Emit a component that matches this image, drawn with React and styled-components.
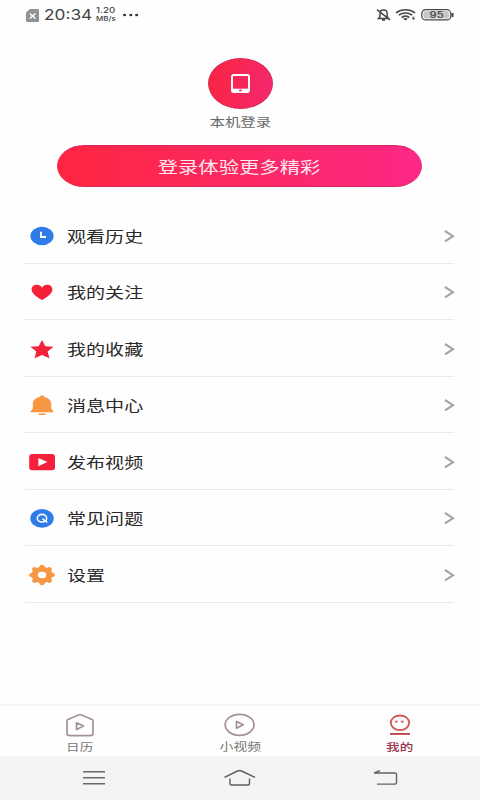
import React from 'react';
import styled, { createGlobalStyle } from 'styled-components';

const Global = createGlobalStyle`
  *, *::before, *::after { box-sizing: border-box; }
  body { margin: 0; background: #fefefe; font-family: "Liberation Sans", "Noto Sans CJK SC", sans-serif; }
  svg { display: block; flex: none; overflow: visible; }
`;

const Screen = styled.div`
  width: 480px;
  height: 800px;
  display: flex;
  flex-direction: column;
  background: #fefefe;
  overflow: hidden;
`;

const Wide = styled.span`
  display: block;
  flex: none;
  white-space: nowrap;
  font-family: ${p => p.$latin ? '"Inter", sans-serif' : '"Noto Sans CJK SC", sans-serif'};
  font-size: ${p => p.$size}px;
  line-height: ${p => p.$line || 20}px;
  font-weight: ${p => p.$weight || 400};
  color: ${p => p.$color};
  transform: scaleX(${p => p.$stretch || 1.27});
  transform-origin: ${p => p.$origin || 'center'};
`;

const StatusBar = styled.header`
  height: 30px;
  flex: none;
  display: flex;
  justify-content: space-between;
  padding: 0 26px 0 26px;
`;

const StatusGroup = styled.div`
  display: flex;
  align-items: center;
`;

const Clock = styled.div`
  width: 48px;
  margin-left: 5px;
`;

const Speed = styled.div`
  width: 20px;
  margin: 0 0 0 4px;
`;

const Profile = styled.section`
  flex: none;
  height: 177px;
  padding-top: 28px;
  display: flex;
  flex-direction: column;
  align-items: center;
`;

const Avatar = styled.div`
  width: 65px;
  height: 51px;
  border-radius: 50%;
  display: grid;
  place-items: center;
  background: linear-gradient(100deg, #fb2440, #f4286f);
  border: 1px solid #d52852;
`;

const AccountName = styled.div`
  margin-top: 3px;
`;

const LoginButton = styled.button`
  width: 365px;
  height: 42px;
  margin: 13px 1px 0 0;
  padding: 0;
  border: 1px solid #d9285f;
  border-left-color: #f8284a;
  border-right-color: #f52a83;
  border-radius: 27px / 21px;
  display: grid;
  place-items: center;
  background: linear-gradient(90deg, #fe2540, #fc2861 50%, #fc2886);
`;

const Menu = styled.nav`
  flex: 1;
  margin: 0 26px 0 25px;
`;

const Row = styled.a`
  height: 56.5px;
  display: flex;
  align-items: center;
  padding: 2px 0 0 3px;
  border-bottom: 1px solid #e9e9e9;
`;

const RowLabel = styled.div`
  flex: 1;
  margin-left: 11px;
  display: flex;
`;

const TabBar = styled.nav`
  height: 52px;
  flex: none;
  display: grid;
  grid-template-columns: repeat(3, 1fr);
  border-top: 2px solid #f4f4f4;
`;

const Tab = styled.a`
  display: flex;
  flex-direction: column;
  align-items: center;
  padding-top: 6px;
`;

const SystemBar = styled.footer`
  height: 44px;
  flex: none;
  display: flex;
  justify-content: space-between;
  align-items: center;
  padding: 0 81px;
  background: #f4f4f4;
`;

const icons = {
  clock: <><ellipse cx="14" cy="14" rx="11.6" ry="9.2" fill="#2f7be8" /><path d="M13 9.8V15h5" fill="none" stroke="#fff" strokeWidth="1.9" /></>,
  heart: <path d="M14 22C10.5 19.8 3.6 16 3.6 11.4C3.6 8.6 5.9 6.8 8.7 6.8C11.2 6.8 13 7.9 14 9.7C15 7.9 16.8 6.8 19.3 6.8C22.1 6.8 24.4 8.6 24.4 11.4C24.4 16 17.5 19.8 14 22Z" fill="#f42138" />,
  star: <path d="M14 5l3.3 6.2 8.3.6-6 4.8 1.9 6.7-7.5-3.3-7.5 3.3 1.9-6.7-6-4.8 8.3-.6z" fill="#f42138" />,
  bell: <path d="M12.2 4.6h3.6v1.2c4.4.9 7.4 3.7 7.4 7.2v4.8l2.1 2.4v1.1H2.7v-1.1l2.1-2.4V13c0-3.5 3-6.3 7.4-7.2zM10.3 22.4h7.4v.8q0 .8-1.5.8h-4.4q-1.5 0-1.5-.8z" fill="#f79643" />,
  video: <><rect x="1.2" y="5.9" width="25.8" height="16.4" rx="3" fill="#f5213c" /><path d="M10.4 10v8.2l9-4.1z" fill="#fff" /></>,
  question: <><ellipse cx="14" cy="14.4" rx="11.7" ry="9.3" fill="#2f7be8" /><ellipse cx="14" cy="14.2" rx="4.7" ry="3.8" fill="none" stroke="#fff" strokeWidth="1.6" /><path d="M14.3 14.6l5 3.8" stroke="#fff" strokeWidth="1.6" /></>,
};

const gear = Array.from({ length: 8 }, (_, i) => {
  const at = (deg, r) => {
    const a = (i * 45 + deg) * Math.PI / 180;
    return `${(14 + Math.sin(a) * r * 1.27).toFixed(2)} ${(14 - Math.cos(a) * r).toFixed(2)}`;
  };
  return `${i ? 'L' : 'M'}${at(-14, 8.6)}Q${at(-10, 10.4)} ${at(0, 10.2)}Q${at(10, 10.4)} ${at(14, 8.6)}Q${at(22.5, 7.6)} ${at(31, 8.6)}`;
}).join('') + 'Z';

icons.settings = <><path d={gear} fill="#f79643" /><ellipse cx="14" cy="14" rx="4.2" ry="3.3" fill="#fff" /></>;

const rows = [
  ['clock', '观看历史'],
  ['heart', '我的关注'],
  ['star', '我的收藏'],
  ['bell', '消息中心'],
  ['video', '发布视频'],
  ['question', '常见问题'],
  ['settings', '设置'],
];

function MenuRow({ icon, label }) {
  return (
    <Row>
      <svg width="28" height="28">{icons[icon]}</svg>
      <RowLabel><Wide $size={15} $color="#292929" $origin="left">{label}</Wide></RowLabel>
      <svg width="10" height="12" fill="none" stroke="#a5a5a5" strokeWidth="2.1"><path d="M1 1l8 5.2L1 11.4" /></svg>
    </Row>
  );
}

export default function App() {
  return (
    <Screen>
      <Global />
      <StatusBar>
        <StatusGroup>
          <svg width="13" height="13">
            <path d="M4 0h8q1 0 1 1v11q0 1-1 1H1q-1 0-1-1V3.5z" fill="#929292" />
            <path d="M3.8 4.5l5.6 5m0-5l-5.6 5" stroke="#fff" strokeWidth="1.5" />
          </svg>
          <Clock><Wide $latin $size={14.5} $color="#444" $origin="left" $stretch={1.19}>20:34</Wide></Clock>
          <Speed>
            <Wide $latin $size={7} $line={8} $color="#444" $origin="left" $stretch={1.38} $weight={500}>1.20</Wide>
            <Wide $latin $size={6.5} $line={8} $color="#444" $origin="left" $stretch={1.22} $weight={500}>MB/s</Wide>
          </Speed>
          <svg width="17" height="4" fill="#333"><ellipse cx="8.6" cy="2" rx="1.5" ry="1.2" /><ellipse cx="14.8" cy="2" rx="1.5" ry="1.2" /><ellipse cx="20.6" cy="2" rx="1.5" ry="1.2" /></svg>
        </StatusGroup>
        <StatusGroup>
          <svg width="78" height="14" fill="none" stroke="#484848">
            <path d="M2.5 10.5h10l-1.4-2V5.2C11.1 2.9 9.5 2 7.5 2S4 2.9 4 5.2v3.3zM6 12h3M1 1.6l13 10.2" strokeWidth="1.5" />
            <path d="M20 4.8c5.5-4 13.5-4 19 0M22.8 7.2c4-2.8 9.4-2.8 13.4 0M25.7 9.5c2.3-1.6 5.3-1.6 7.6 0" strokeWidth="1.6" />
            <path d="M27 10.7q2.5-1.2 5 0l-2.5 1.8z" fill="#484848" stroke="none" />
            <path d="M37.5 8.5l-1.4 2.2h2.7m-1-2v3.5" strokeWidth=".8" />
            <rect x="45.8" y="1.7" width="29" height="10.2" rx="4" fill="#fff" strokeWidth="1.3" />
            <rect x="47.5" y="3" width="25.6" height="7.6" rx="2.6" fill="#c7c7c7" stroke="none" />
            <path d="M76.5 5v4" strokeWidth="2" />
            <text x="60.6" y="10" textAnchor="middle" textLength="14" lengthAdjust="spacingAndGlyphs" fill="#3e3e3e" stroke="none" fontFamily="Inter, sans-serif" fontSize="8.5" fontWeight="500">95</text>
          </svg>
        </StatusGroup>
      </StatusBar>

      <Profile>
        <Avatar>
          <svg width="19" height="19"><rect x="1" y="1" width="17" height="17" rx="1.5" fill="none" stroke="#fff" strokeWidth="1.9" /><path d="M1 16.3h17" stroke="#fff" strokeWidth="3.2" /><ellipse cx="9.5" cy="16.4" rx="1.5" ry=".9" fill="#f02757" /></svg>
        </Avatar>
        <AccountName><Wide $size={12.2} $color="#696969">本机登录</Wide></AccountName>
        <LoginButton><Wide $size={16} $color="#ffe9f0">登录体验更多精彩</Wide></LoginButton>
      </Profile>

      <Menu>{rows.map(([icon, label]) => <MenuRow key={icon} icon={icon} label={label} />)}</Menu>

      <TabBar>
        <Tab>
          <svg width="30" height="26" fill="none" stroke="#a69191" strokeWidth="1.7" strokeLinejoin="round">
            <path d="M14 2.8q1-.5 2 0l11 4.7q1 .5 1 1.5v12.3q0 2.4-3 2.4H5q-3 0-3-2.4V9q0-1 1-1.5z" /><path d="M11.5 10.7v6.8l7-3.4z" />
          </svg>
          <Wide $size={10.7} $line={17} $color="#777">日历</Wide>
        </Tab>
        <Tab>
          <svg width="32" height="26" fill="none" stroke="#a69191" strokeWidth="1.7" strokeLinejoin="round">
            <ellipse cx="15.6" cy="12.8" rx="14.4" ry="10.5" /><path d="M12.5 9.4v6.8l6.7-3.4z" />
          </svg>
          <Wide $size={10.9} $line={17} $color="#777">小视频</Wide>
        </Tab>
        <Tab>
          <svg width="22" height="26" fill="none" stroke="#d05755" strokeWidth="1.8">
            <ellipse cx="11" cy="10.8" rx="9.2" ry="7.3" /><path d="M5.8 9.7h2.8M11.9 9.7h2.8" /><path d="M1 21.9h20" stroke="#b7403f" />
          </svg>
          <Wide $size={10.7} $line={17} $weight={500} $color="#983447">我的</Wide>
        </Tab>
      </TabBar>

      <SystemBar>
        <svg width="26" height="16" stroke="#696969" strokeWidth="1.4"><path d="M2 1.7h22M2 7.7h22M2 13.7h22" /></svg>
        <svg width="32" height="18" fill="none" stroke="#5d5d5d" strokeWidth="1.4"><path d="M.5 8.3L13.5 2q2-1 4 0l13.5 6.3M6 9.5v5q0 1.5 2 1.5h15.5q2 0 2-1.5v-5" /></svg>
        <svg width="26" height="18" fill="none" stroke="#626262" strokeWidth="1.4"><path d="M1 4h21q1.5 0 1.5 1.5v8q0 1.6-1.5 1.6H4M1 4l6-2.3" /></svg>
      </SystemBar>
    </Screen>
  );
}
